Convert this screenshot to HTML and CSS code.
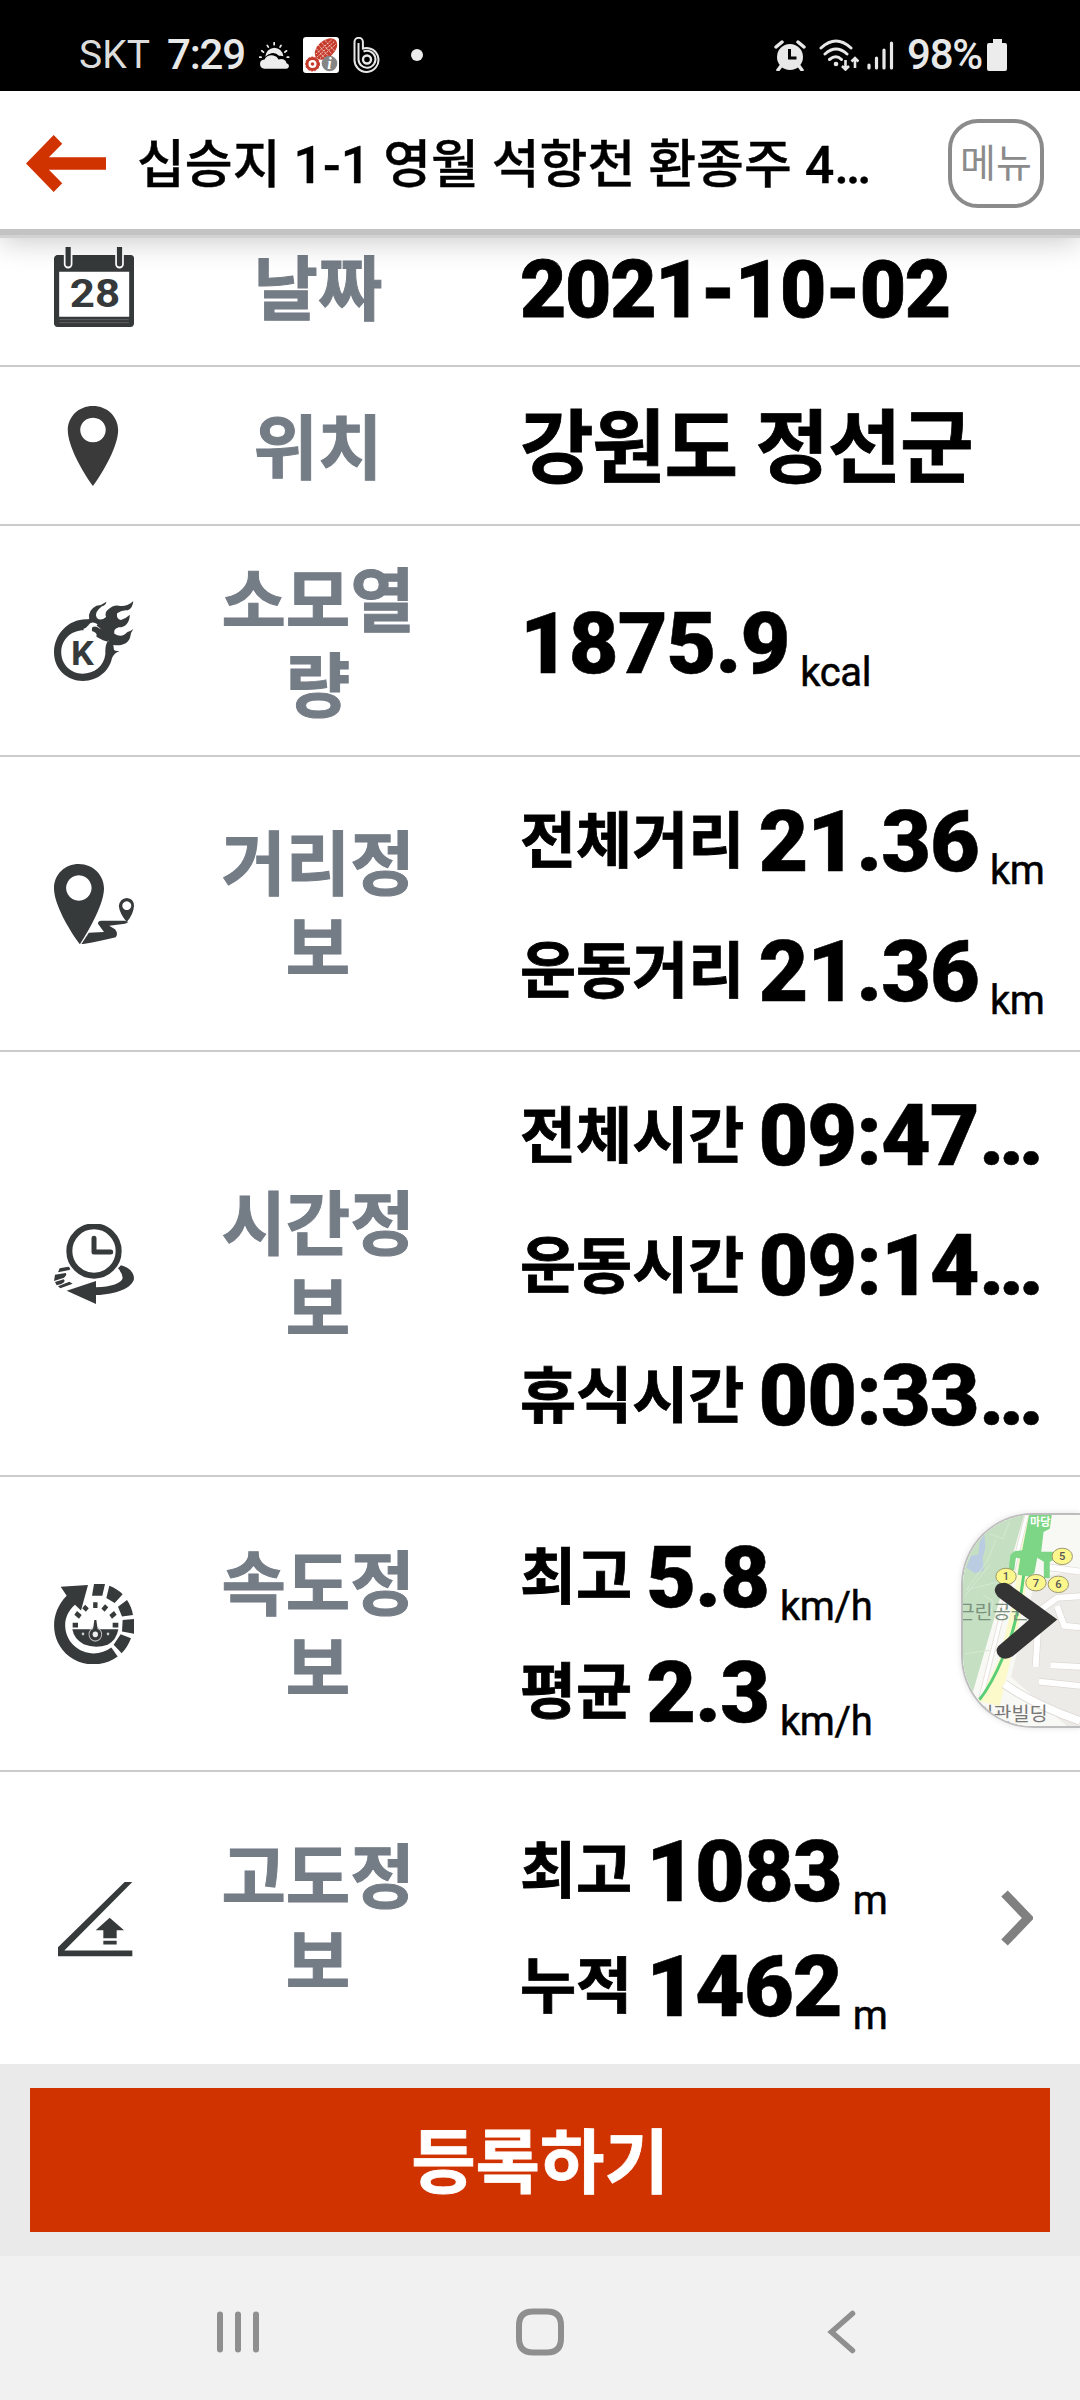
FILE: index.html
```html
<!DOCTYPE html>
<html lang="ko">
<head>
<meta charset="utf-8">
<title>운동 기록</title>
<link rel="stylesheet" href="styles.css">
</head>
<body>
<div class="screen">
  <div class="status">
    <span class="carrier">SKT</span>
    <span class="clock">7:29</span>
    <svg class="weather" viewBox="754 124 90 80" preserveAspectRatio="none"><g fill="#ececec"><path d="M770 203q-13-2-13-14 0-12 13-13 8-15 26-12 10 2 15 12 8-4 15 0 7 3 8 11 7 2 7 8 0 7-8 8z"/><path d="M772 168q3-24 26-27 22 1 27 25-6-2-13-1-9-11-22-8-10 2-18 11z"/></g><g stroke="#ececec" stroke-width="5" stroke-linecap="round"><path d="M756 169h4M762 150l5 4M778 134l3 5M798 126v6M818 134l-3 5M834 150l-5 4M840 169h-4"/></g></svg>
    <svg class="app" viewBox="0 0 36 36"><rect width="36" height="36" rx="3" fill="#fff"/><g transform="rotate(-42 23 12)"><ellipse cx="23" cy="12" rx="13" ry="8.5" fill="#c63b2c"/><path d="M12 9h22M11 12h24M12 15h22M16 5v14M20 4v16M24 4v16M28 5v14" stroke="#f3cfca" stroke-width=".9" stroke-dasharray="2 1"/></g><circle cx="9.500" cy="27" r="5.500" fill="none" stroke="#c63b2c" stroke-width="3"/><circle cx="9.500" cy="27" r="7" fill="none" stroke="#c63b2c" stroke-width="1" stroke-dasharray="2 1.500"/><circle cx="9.500" cy="27" r="1.800" fill="#c63b2c"/><circle cx="26.500" cy="26.500" r="7.800" fill="#858585"/><text x="26.500" y="32" text-anchor="middle" class="info">i</text></svg>
    <svg class="blog" viewBox="0 0 28 36" fill="none" stroke="#e8e8e8"><path d="M1.500 22V5a4.200 4.200 0 0 1 8.400 0v6.500A12 12 0 1 1 1.500 22z" stroke-width="2"/><path d="M5.500 22V6v16a8.500 8.500 0 1 0 5-7.500" stroke-width="2"/><circle cx="14" cy="22.500" r="4" stroke-width="2.400"/></svg>
    <span class="dot"></span>
    <span class="push"></span>
    <svg class="alarm" viewBox="0 0 32 31"><circle cx="16" cy="17" r="13" fill="#e8e8e8"/><path d="M2 7l6-5M24 2l6 5" stroke="#e8e8e8" stroke-width="3.500" stroke-linecap="round"/><path d="M7 26l-3 4M25 26l3 4" stroke="#e8e8e8" stroke-width="3.500" stroke-linecap="round"/><path d="M15.500 9v9h7" stroke="#000" stroke-width="3" fill="none"/></svg>
    <svg class="wifi" viewBox="0 0 40 32" fill="none" stroke="#e8e8e8"><g stroke-width="3" stroke-linecap="round"><path d="M2 9q15-14 30 0M6 15q11-10 22 0M10.500 20.500q6.500-5.500 12 0"/></g><circle cx="17" cy="25" r="2.300" fill="#e8e8e8" stroke="none"/><g stroke-width="2.600"><path d="M26.500 21v9M23 27l3.500 3.500L30 27M36 29v-9M32.500 22.500L36 19l3.500 3.500"/></g></svg>
    <svg class="signal" viewBox="0 0 27 30" stroke="#e8e8e8" stroke-width="3.200" stroke-linecap="round"><path d="M2 25v3M9.500 18v10M17 10v18M24.500 3v25"/></svg>
    <span class="percent">98%</span>
    <svg class="battery" viewBox="0 0 20 32"><path d="M6 0h9v4h3q2 0 2 2v24q0 2-2 2H2q-2 0-2-2V6q0-2 2-2h4z" fill="#ececec"/></svg>
  </div>

  <div class="header">
    <svg class="back" viewBox="75 404 234 170" preserveAspectRatio="none"><path d="M156 404L181 430 142 470H309V508H142L181 548 156 574 75 489z" fill="#d13300"/></svg>
    <div class="title">십승지 1-1 영월 석항천 환종주 4…</div>
    <div class="menu">메뉴</div>
  </div>

  <div class="list">
    <div class="row single">
      <svg class="icon" viewBox="157 740 232 240" preserveAspectRatio="none"><path d="M165 764H381Q389 766 389 774V970Q387 980 379 980H167Q158 979 157 970V774Q158 766 165 764zM172 814V949H375V814z" fill="#35393a" fill-rule="evenodd"/><path d="M173 958H374M173 967H374" stroke="#777" stroke-width="2"/><path d="M198 735V792M347 735V792" stroke="#fff" stroke-width="25" stroke-linecap="round"/><path d="M198 735V791M347 735V791" stroke="#35393a" stroke-width="15" stroke-linecap="round"/><text x="276" y="919" text-anchor="middle" textLength="146" lengthAdjust="spacingAndGlyphs" class="cal">28</text></svg>
      <div class="label">날짜</div>
      <div class="values"><div class="line"><b class="plain">2021-10-02</b></div></div>
    </div>
    <div class="row single">
      <svg class="icon" viewBox="157 105 232 240" preserveAspectRatio="none"><path d="M270 105C312 105 343 137 343 178 343 225 300 303 270 345 240 303 197 225 197 178 197 137 228 105 270 105zM270 140a37 37 0 1 0 0.100 0z" fill="#3a3a3a" fill-rule="evenodd"/></svg>
      <div class="label">위치</div>
      <div class="values"><div class="line"><b class="plain place-name">강원도 정선군</b></div></div>
    </div>
    <div class="row calorie">
      <svg class="icon" viewBox="157 690 232 240" preserveAspectRatio="none"><g fill="#363a3b"><path d="M257 745C201 741 157 789 157 844 157 895 195 930 241 930 286 930 318 898 325 862Q331 846 347 840 335 841 331 837L329 822C355 826 373 817 378 798Q380 783 387 774 378 781 370 783 354 802 332 788 329 773 345 769 375 768 377 731 366 742 351 747 337 744 340 727 356 715 371 718 385 713 387 690 372 706 350 705 330 699 315 715 303 723 308 738 292 752 281 740 272 725 296 706Q307 703 309 692 295 703 280 704 255 717 259 743zM243 778Q254 779 264 764 275 757 286 768 308 787 315 810C305 817 306 838 306 849 302 886 273 908 240 908 205 908 178 880 178 844 178 806 207 778 243 778z" fill-rule="evenodd"/><path d="M267 770Q278 761 291 774 308 776 320 790L313 812 299 808 280 797Q284 785 267 780z"/></g><path d="M243 777Q252 776 260 765 267 753 281 763" fill="none" stroke="#fff" stroke-width="8"/><text x="239" y="882" text-anchor="middle" textLength="66" lengthAdjust="spacingAndGlyphs" class="k">K</text></svg>
      <div class="label">소모열량</div>
      <div class="values"><div class="line"><b>1875.9</b><i>kcal</i></div></div>
    </div>
    <div class="row distance">
      <svg class="icon" viewBox="157 308 232 240" preserveAspectRatio="none"><g fill="#363a3b" fill-rule="evenodd"><path d="M229 308C271 308 302 342 302 381 302 426 263 500 232 549 200 505 157 428 157 381 157 339 189 308 229 308zM229 342a37 38 0 1 0 .1 0z"/><path d="M368 410Q389 412 389 434 387 460 368 482 347 456 345 434 348 412 368 410zM368 420a13 13 0 1 0 .1 0z"/><path d="M236 549L258 514 302 512 285 488Q283 479 294 478L362 478 373 482 363 487 317 493 334 504Q344 517 336 528 292 540 236 549z"/></g></svg>
      <div class="label">거리정보</div>
      <div class="values">
        <div class="line"><span>전체거리</span><b>21.36</b><i>km</i></div>
        <div class="line"><span>운동거리</span><b>21.36</b><i>km</i></div>
      </div>
    </div>
    <div class="row time">
      <svg class="icon" viewBox="162 129 240 240"><circle cx="282" cy="210" r="74" fill="none" stroke="#363a3b" stroke-width="18"/><path d="M282 172V213H332" fill="none" stroke="#363a3b" stroke-width="15" stroke-linecap="round" stroke-linejoin="round"/><g fill="#363a3b"><path d="M200 329L288 300V319C333 318 366 306 368 291Q368 278 354 262L363 253C389 260 402 275 402 293 397 320 351 340 288 342V369z"/><path d="M179 262L205 257Q214 262 208 267L174 274zM165 281L197 276Q203 281 192 290L162 300zM165 303L191 295Q199 302 184 309L170 313zM174 316L208 302 218 308 181 322z"/></g></svg>
      <div class="label">시간정보</div>
      <div class="values">
        <div class="line"><span>전체시간</span><b>09:47<em>…</em></b></div>
        <div class="line"><span>운동시간</span><b>09:14<em>…</em></b></div>
        <div class="line"><span>휴식시간</span><b>00:33<em>…</em></b></div>
      </div>
    </div>
    <div class="row pair">
      <svg class="icon" viewBox="162 288 240 224" preserveAspectRatio="none"><g fill="#363a3b"><path d="M182 296L264 291 243 362 225 346C183 379 190 431 220 459 254 490 303 488 334 466L353 491C312 519 252 522 208 491 151 449 146 372 200 321z"/><path d="M282 288H315L307 321H276zM328 293Q350 300 368 317L344 341 319 327zM381 333Q395 352 399 375L366 379 354 352zM368 389L402 386V427L366 421zM362 429L393 440Q382 466 365 482L341 458z"/><path d="M217 415H355Q349 446 323 458 287 470 251 457 222 442 217 415z"/></g><g stroke="#363a3b" stroke-width="13"><path d="M286 339V355M251 351L262 361M320 349L309 361M227 369L241 380M346 369L332 380M218 403H234M338 403H355"/></g><circle cx="286" cy="429" r="19" fill="none" stroke="#bbb" stroke-width="3"/><path d="M283 389H289L295 428H277z" fill="#363a3b"/><circle cx="286" cy="429" r="14" fill="#363a3b"/><circle cx="286" cy="429" r="8" fill="#eee"/><circle cx="249" cy="428" r="4" fill="#ccc"/><circle cx="324" cy="428" r="4" fill="#ccc"/></svg>
      <div class="label">속도정보</div>
      <div class="values">
        <div class="line"><span>최고</span><b>5.8</b><i>km/h</i></div>
        <div class="line"><span>평균</span><b>2.3</b><i>km/h</i></div>
      </div>
      <svg class="map" viewBox="124 98 356 642" preserveAspectRatio="none">
        <rect x="124" y="98" width="356" height="642" fill="#f8f8f4"/>
        <path d="M310 98L124 740V98z" fill="#c5dfc2"/>
        <path d="M189 155L192 198 184 228 187 267 160 275 134 258 149 222 170 219 175 180z" fill="#b9cce2"/>
        <path d="M205 155L245 170 265 120M225 170L200 235 135 325 240 300M130 345L205 250M130 520L205 510M185 340L215 360 205 420" fill="none" stroke="#d4e8d2" stroke-width="3"/>
        <path d="M312 98H324L183 665 172 655z" fill="#fff" stroke="#ddd3cc" stroke-width="2"/>
        <path d="M324 98H345L308 370 268 540 236 680 172 664 235 535 280 345 292 240z" fill="#fcf9ca"/>
        <path d="M345 290L480 265V740H440L270 590 318 400z" fill="#edebe7"/>
        <path d="M370 255L480 270M335 405L410 350 480 345M410 375L432 435 480 440M390 555L480 560M355 605L480 618M355 400L345 560" fill="none" stroke="#dcd8d2" stroke-width="22"/>
        <path d="M370 255L480 270M335 405L410 350 480 345M410 375L432 435 480 440M390 555L480 560M355 605L480 618M355 400L345 560" fill="none" stroke="#fff" stroke-width="18"/>
        <path d="M250 612Q330 670 480 725" fill="none" stroke="#dcd8d2" stroke-width="28"/><path d="M250 612Q330 670 480 725" fill="none" stroke="#fff" stroke-width="23"/>
        <path d="M310 270Q291 430 246 530 210 615 174 660" fill="none" stroke="#5bcf78" stroke-width="9"/>
        <path d="M325 98H394L388 140 369 150 362 210H400V235L388 240V290H370V240L350 228 341 275 325 285 290 280 298 230 285 228 280 265H263L268 220 280 208 304 205z" fill="#7dd685"/>
        <text x="328" y="131" textLength="62" lengthAdjust="spacingAndGlyphs" class="station">마당</text>
        <g fill="#fbf78c" stroke="#9b966d" stroke-width="3"><ellipse cx="255" cy="285" rx="31" ry="25"/><ellipse cx="426" cy="224" rx="31" ry="25"/><ellipse cx="346" cy="304" rx="31" ry="25"/><ellipse cx="414" cy="309" rx="31" ry="25"/></g>
        <g class="exit"><text x="255" y="297">1</text><text x="426" y="236">5</text><text x="346" y="316">7</text><text x="414" y="321">6</text></g>
        <text x="104" y="415" class="place park">근린공원</text><text x="161" y="726" class="place">기관빌딩</text>
        <path d="M246 305Q256 302 268 312L411 416 275 528Q254 541 236 530 219 514 231 497L325 417 230 347Q212 326 228 310 236 304 246 305z" fill="#343434"/>
      </svg>
    </div>
    <div class="row pair last">
      <svg class="icon" viewBox="162 1114 240 224" preserveAspectRatio="none"><g fill="#363a3b"><path d="M174 1333V1308L374 1125H397L193 1317H397V1333z"/><path d="M329 1225L372 1260H350V1283H310V1260H287zM310 1290H350V1300H310z"/></g></svg>
      <div class="label">고도정보</div>
      <div class="values">
        <div class="line"><span>최고</span><b>1083</b><i>m</i></div>
        <div class="line"><span>누적</span><b>1462</b><i>m</i></div>
      </div>
      <svg class="chevron" viewBox="0 0 32 56"><path d="M3.500 3.500L27 28 3.500 52.500" fill="none" stroke="#808080" stroke-width="9"/></svg>
    </div>
  </div>

  <div class="footer"><div class="submit">등록하기</div></div>

  <div class="nav">
    <svg viewBox="0 0 48 48"><path d="M6 6.500v35M24 6.500v35M42 6.500v35" stroke="#8f8f8f" stroke-width="6" stroke-linecap="round"/></svg>
    <svg viewBox="0 0 48 48"><path d="M17 3.500h14q14 0 14 14v13q0 14-14 14H17Q3 44.500 3 30.500V17.500Q3 3.500 17 3.500z" fill="none" stroke="#8f8f8f" stroke-width="6"/></svg>
    <svg viewBox="0 0 48 48"><path d="M34.500 5.500L13.500 24 34.500 42.500" fill="none" stroke="#8f8f8f" stroke-width="5.500" stroke-linecap="round"/></svg>
  </div>
</div>
</body>
</html>
```
FILE: styles.css
```css
* { box-sizing: border-box; }
body { margin: 0; background: #fff; font-family: Roboto, "Noto Sans CJK KR", sans-serif; color: #000; }
.screen { width: 1080px; height: 2400px; display: flex; flex-direction: column; overflow: hidden; }
svg { display: block; flex: none; }

.status { height: 91px; flex: none; background: #000; color: #e8e8e8; display: flex; align-items: center; padding: 19px 73px 0 79px; font-size: 40px; line-height: 44px; white-space: nowrap; }
.carrier { width: 88px; font-size: 39px; color: #dcdcdc; }
.clock { width: 92px; font-size: 42px; font-weight: 500; letter-spacing: -1.2px; }
.weather { width: 31px; height: 27px; margin-right: 13px; }
.app { width: 36px; height: 36px; margin-right: 14px; }
.info { font: italic 700 16px "Liberation Serif", serif; fill: #fff; }
.blog { width: 28px; height: 36px; margin-right: 30px; }
.dot { width: 12px; height: 12px; border-radius: 50%; background: #ececec; }
.push { flex: 1; }
.alarm { width: 32px; height: 31px; margin-right: 13px; }
.wifi { width: 40px; height: 32px; margin-right: 8px; }
.signal { width: 27px; height: 30px; margin-right: 13px; }
.percent { width: 80px; font-size: 42px; font-weight: 500; letter-spacing: -1.2px; }
.battery { width: 20px; height: 32px; }

.header { position: relative; z-index: 2; height: 144px; flex: none; background: #fff; display: flex; align-items: center; padding: 0 36px 0 26px; border-bottom: 6px solid #c3c3c3; box-shadow: 0 3px 0 #d2d2d2, 0 6px 28px rgba(0,0,0,.22); }
.back { width: 80px; height: 57px; margin: 6px 31px 0 0; }
.title { flex: 1; font-size: 52px; line-height: 70px; font-weight: 500; white-space: nowrap; padding-top: 12px; -webkit-text-stroke: .4px #000; }
.menu { width: 96px; height: 89px; margin-top: 6px; border: 4px solid #8b8b8b; border-radius: 30px; font-size: 39px; line-height: 82px; text-align: center; color: #8b8b8b; }

.list { height: 1856px; flex: none; margin-top: -27px; display: flex; flex-direction: column; overflow: hidden; }
.row { position: relative; flex: none; display: grid; grid-template-columns: 156px 216px 1fr; align-items: center; padding-left: 54px; border-bottom: 2px solid #cbcbcb; }
.single { height: 159px; }
.calorie { height: 231px; }
.distance { height: 295px; }
.time { height: 425px; }
.pair { height: 295px; }
.last { height: 292px; border: 0; }
.icon { width: 80px; height: 80px; }
.label { padding-top: 10px; font-size: 70px; line-height: 85px; font-weight: 700; color: #747c86; text-align: center; word-break: break-all; -webkit-text-stroke: 1px #747c86; }
.values { padding: 6px 0 0 94px; }
.pair .values { padding-top: 24px; }
.last .values { padding-top: 22px; }
.last .label { padding-top: 8px; }
.line { height: 130px; display: flex; align-items: center; white-space: nowrap; }
.pair .line { height: 115px; }
.line span { font-size: 61px; line-height: 90px; font-weight: 700; margin-right: 14px; -webkit-text-stroke: .8px #000; }
.line b { font-size: 86px; line-height: 110px; font-weight: 900; letter-spacing: -1px; -webkit-text-stroke: .5px #000; }
.line em { font-style: normal; letter-spacing: 0; font-size: 83px; }
.line .plain { font-size: 80px; letter-spacing: -1.3px; -webkit-text-stroke: .8px #000; }
.line .place-name { font-weight: 700; }
.line i { font-style: normal; font-size: 40px; line-height: 47px; margin: 57px 0 0 11px; letter-spacing: -.4px; -webkit-text-stroke: .5px #000; }

.map { position: absolute; left: 961px; top: 36px; width: 119px; height: 215px; border: 2px solid #bdbdbd; border-right: 0; border-radius: 72px 0 0 72px; box-shadow: 0 0 6px rgba(0,0,0,.12); }
.station { font-size: 34px; font-weight: 700; fill: #fff; }
.exit { font: 500 34px Roboto, sans-serif; text-anchor: middle; fill: #555; }
.place { font-size: 60px; fill: #777; }
.park { fill: #7a917d; }
.chevron { position: absolute; left: 1001px; top: 118px; width: 32px; height: 56px; }
.cal { font: 700 114px Roboto, sans-serif; fill: #35393a; }
.k { font: 700 102px Roboto, sans-serif; fill: #363a3b; }

.footer { position: relative; height: 192px; flex: none; background: #eaeaea; padding: 24px 30px; }
.submit { height: 144px; padding-top: 4px; background: #d13300; color: #fff; text-align: center; font-size: 70px; line-height: 144px; font-weight: 700; -webkit-text-stroke: .8px #fff; }
.nav { height: 144px; flex: none; background: #f1f1f1; display: flex; justify-content: space-between; align-items: center; padding: 8px 214px 0; }
.nav svg { width: 48px; height: 48px; }
```
